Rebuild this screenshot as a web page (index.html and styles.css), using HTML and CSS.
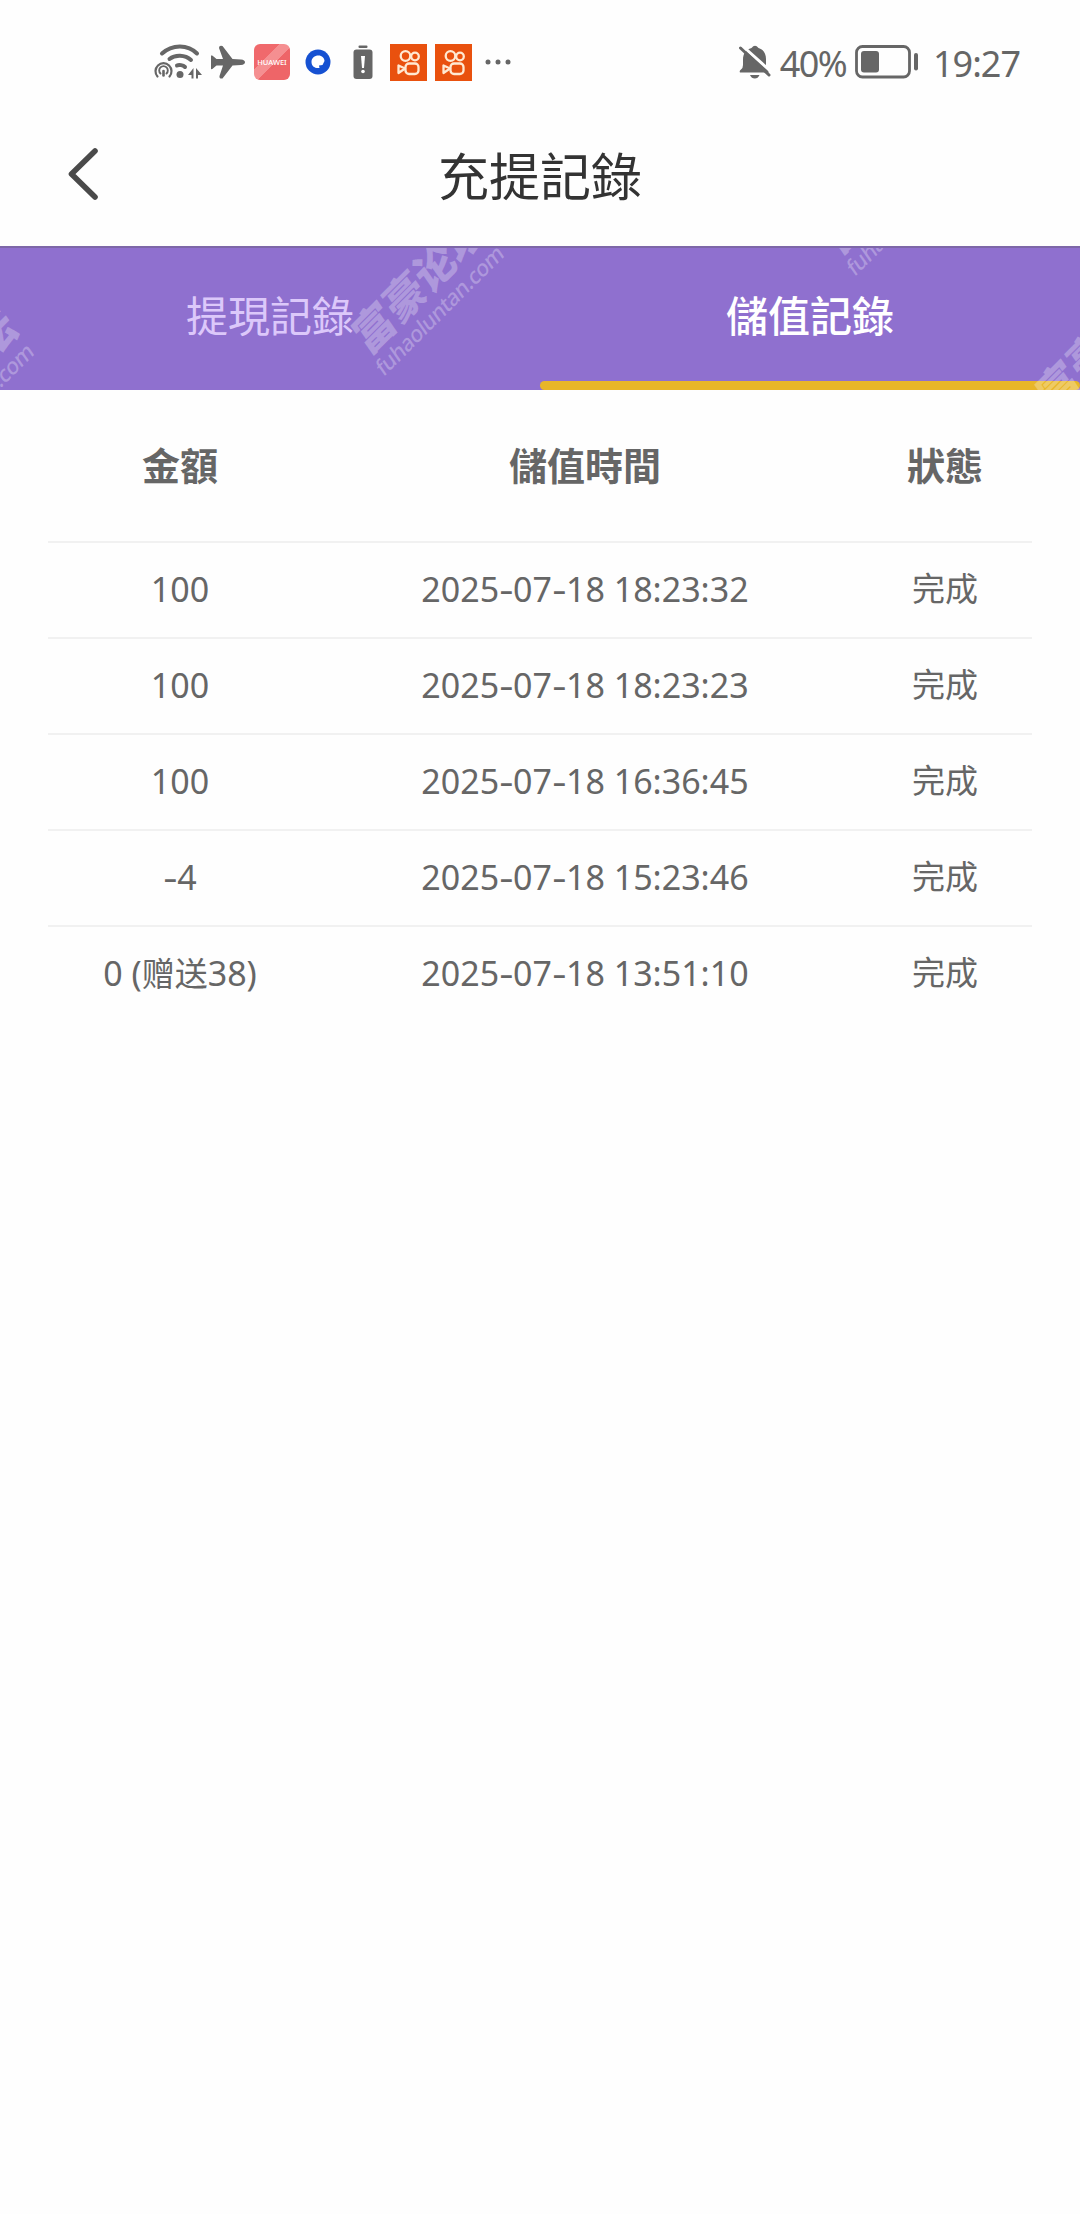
FILE: index.html
```html
<!DOCTYPE html>
<html lang="zh-Hant">
<head>
    <meta charset="UTF-8">
    <meta name="viewport" content="width=device-width, initial-scale=1.0">
    <title>充提記錄</title>
    <link rel="stylesheet" href="styles.css">
</head>
<body>
    <div class="status-bar">
        <div class="status-left">
            <!-- wifi -->
            <svg class="icon-wifi" width="48" height="36" viewBox="0 0 48 36" fill="none" stroke="#666" stroke-linecap="round">
                <path d="M8 9.500C18 0 34 0 43 9.500" stroke-width="4"/>
                <path d="M15.500 15C21 10.500 31 10.500 37 16" stroke-width="4"/>
                <path d="M23 21.500C25 20.500 29 21 31 23" stroke-width="4"/>
                <circle cx="26" cy="30.500" r="3.500" fill="#666" stroke="none"/>
                <path d="M3.500 32.500A8 8 0 1 1 15.500 32.500" stroke-width="2.200"/>
                <path d="M6.500 29.500A4.300 4.300 0 1 1 12.500 29.500" stroke-width="1.900"/>
                <path d="M9.500 27V31.500" stroke-width="2.600"/>
                <path d="M34 31L39.500 24V34.500H37.500V31ZM42 34.500V24L48 31H44V34.500Z" fill="#666" stroke="none"/>
            </svg>
            <!-- 飛航模式 -->
            <svg class="icon-plane" width="36" height="36" viewBox="0 0 36 36" fill="#666">
                <path d="M1 11.500Q2.500 11 3.500 12.500L6.500 15H13L9 4Q9 1 12.500 2L22.500 15L31 15.500Q35 16 35 18.200Q35 20.500 31 21L22.500 21.500L12.500 34.500Q9 35 9.500 32L13 21.500H6.500L3.500 24Q2.500 25.500 1 25Z"/>
            </svg>
            <div class="huawei"><span>HUAWEI</span></div>
            <svg class="icon-browser" width="26" height="26" viewBox="0 0 26 26">
                <circle cx="13" cy="13" r="12.500" fill="#1651d2"/>
                <path d="M13.500 6.500C17 6.500 19.500 9 19.500 12L17.500 16L14 16.500L14.500 19C9.500 19.500 6.500 17 6.500 13C6.500 9 9.500 6.500 13.500 6.500Z" fill="#fff"/>
            </svg>
            <svg class="icon-alert" width="20" height="36" viewBox="0 0 20 36">
                <rect x="5.500" y="1.500" width="9" height="2.500" rx="1" fill="#666"/>
                <rect x="0.500" y="5.500" width="19" height="29.500" rx="3" fill="#666"/>
                <path d="M8 12H12L11 24H9Z" fill="#fff"/>
                <circle cx="10" cy="27.500" r="1.800" fill="#fff"/>
            </svg>
            <svg class="icon-video" width="37" height="37" viewBox="0 0 37 37">
                <rect width="37" height="37" fill="#e9510e"/>
                <g fill="none" stroke="#ffe9d2" stroke-width="2.300" stroke-linejoin="round">
                    <circle cx="15.500" cy="12" r="4.800"/>
                    <circle cx="25" cy="12.500" r="3.800"/>
                    <rect x="15.500" y="19.500" width="13" height="10.500" rx="3.500"/>
                    <path d="M15 24.500L8.500 21.500V29Z"/>
                </g>
            </svg>
            <svg class="icon-video" width="37" height="37" viewBox="0 0 37 37">
                <rect width="37" height="37" fill="#e9510e"/>
                <g fill="none" stroke="#ffe9d2" stroke-width="2.300" stroke-linejoin="round">
                    <circle cx="15.500" cy="12" r="4.800"/>
                    <circle cx="25" cy="12.500" r="3.800"/>
                    <rect x="15.500" y="19.500" width="13" height="10.500" rx="3.500"/>
                    <path d="M15 24.500L8.500 21.500V29Z"/>
                </g>
            </svg>
            <svg class="icon-more" width="28" height="8" viewBox="0 0 28 8" fill="#666">
                <circle cx="4" cy="4" r="2.500"/>
                <circle cx="14" cy="4" r="2.500"/>
                <circle cx="24" cy="4" r="2.500"/>
            </svg>
        </div>
        <div class="status-right">
            <!-- 靜音 -->
            <svg class="icon-bell" width="34" height="36" viewBox="0 0 34 36">
                <path d="M5 16C5 9 8 5.500 13.500 4Q17 -0.500 20.500 4C25.500 5.500 28 9.500 28 15V23L31 28.500H2Q1 27 3 25.500Q5 24 5 21Z" fill="#666"/>
                <path d="M12 31H21.500Q20 34.500 16.800 34.500Q13.500 34.500 12 31Z" fill="#666"/>
                <path d="M4 1.500L34 28.500" stroke="#fff" stroke-width="3"/>
                <path d="M2.500 4L31 31" stroke="#666" stroke-width="3" stroke-linecap="round"/>
            </svg>
            <span class="percent">40%</span>
            <svg class="icon-battery" width="64" height="34" viewBox="0 0 64 34">
                <rect x="1.500" y="1.500" width="53" height="30.500" rx="6" fill="none" stroke="#666" stroke-width="2.800"/>
                <rect x="6" y="6" width="18" height="21.500" rx="3" fill="#666"/>
                <rect x="59" y="8" width="4" height="17.500" rx="2" fill="#666"/>
            </svg>
            <span class="clock">19:27</span>
        </div>
    </div>

    <div class="nav-bar">
        <svg class="back" width="32" height="54" viewBox="0 0 32 54">
            <path d="M28 4L4.500 27L28 50" fill="none" stroke="#4a4a4a" stroke-width="5.600" stroke-linecap="round" stroke-linejoin="round"/>
        </svg>
        <h1>充提記錄</h1>
    </div>

    <div class="tabs">
        <div class="tab">提現記錄</div>
        <div class="tab active">儲值記錄</div>
        <div class="watermark wm-left"><b>富豪论坛</b><span>fuhaoluntan.com</span></div>
        <div class="watermark wm-center"><b>富豪论坛</b><span>fuhaoluntan.com</span></div>
        <div class="watermark wm-top"><b>富豪论坛</b><span>fuhaoluntan.com</span></div>
        <div class="watermark wm-right"><b>富豪论坛</b><span>fuhaoluntan.com</span></div>
    </div>

    <div class="record-list">
        <div class="row head">
            <div>金額</div>
            <div>儲值時間</div>
            <div>狀態</div>
        </div>
        <div class="row">
            <div class="num">100</div>
            <div class="num">2025<i>-</i>07<i>-</i>18 18:23:32</div>
            <div>完成</div>
        </div>
        <div class="row">
            <div class="num">100</div>
            <div class="num">2025<i>-</i>07<i>-</i>18 18:23:23</div>
            <div>完成</div>
        </div>
        <div class="row">
            <div class="num">100</div>
            <div class="num">2025<i>-</i>07<i>-</i>18 16:36:45</div>
            <div>完成</div>
        </div>
        <div class="row">
            <div class="num"><i>-</i>4</div>
            <div class="num">2025<i>-</i>07<i>-</i>18 15:23:46</div>
            <div>完成</div>
        </div>
        <div class="row">
            <div class="num">0 (<span class="gift" lang="zh-Hans">赠送</span>38)</div>
            <div class="num">2025<i>-</i>07<i>-</i>18 13:51:10</div>
            <div>完成</div>
        </div>
    </div>
</body>
</html>
```
FILE: styles.css
```css
* {
    box-sizing: border-box;
}

body {
    margin: 0;
    width: 1080px;
    min-height: 2214px;
    background-color: #fefefe;
    color: #666;
    font-family: "Noto Sans", "Noto Sans CJK TC", sans-serif;
}

svg {
    display: block;
    flex: none;
}

/* 狀態列 */
.status-bar {
    display: flex;
    justify-content: space-between;
    height: 124px;
    padding: 0 60px 0 154px;
}

.status-left,
.status-right {
    display: flex;
    align-items: center;
    height: 124px;
}

.icon-plane {
    margin-left: 8px;
}

.huawei {
    display: flex;
    align-items: center;
    justify-content: center;
    width: 36px;
    height: 36px;
    margin-left: 8px;
    border-radius: 6px;
    background: linear-gradient(135deg, #f0696c 35%, #f58f91 35%, #f58f91 55%, #ee6568 55%);
    color: #fff;
    font-size: 7.5px;
    font-weight: 500;
}

.icon-browser {
    margin-left: 15px;
}

.icon-alert {
    margin-left: 22px;
}

.icon-video {
    margin-left: 17px;
}

.icon-video + .icon-video {
    margin-left: 8px;
}

.icon-more {
    margin-left: 12px;
}

.percent,
.clock {
    font-size: 36px;
    line-height: 40px;
    padding-top: 4px;
}

.percent {
    margin-left: 8px;
    letter-spacing: -1.6px;
}

.icon-battery {
    margin-left: 9px;
}

.clock {
    margin-left: 14px;
    letter-spacing: -1px;
}

/* 標題列 */
.nav-bar {
    display: grid;
    grid-template-columns: 1fr auto 1fr;
    align-items: center;
    height: 122px;
    padding: 0 67px 18px;
}

.nav-bar .back {
    margin-bottom: 4px;
}

.nav-bar h1 {
    margin: 0;
    font-size: 51px;
    line-height: 60px;
    font-weight: normal;
    color: #333;
}

/* 分頁 */
.tabs {
    display: flex;
    position: relative;
    height: 144px;
    border-top: 2px solid #7d67a8;
    background-color: #8f70cf;
    overflow: hidden;
}

.tab {
    flex: 1;
    padding-top: 38px;
    border-bottom: 9px solid transparent;
    color: #dcc8fa;
    font-size: 42px;
    line-height: 60px;
    text-align: center;
}

.tab.active {
    position: relative;
    color: #fff;
    font-weight: 500;
}

.tab.active::after {
    content: "";
    position: absolute;
    left: 0;
    right: 0;
    bottom: -9px;
    height: 9px;
    border-radius: 5px;
    background-color: #e8b628;
}

/* 浮水印 */
.watermark {
    position: absolute;
    display: flex;
    flex-direction: column;
    width: 172px;
    color: rgba(255, 255, 255, 0.28);
    font-family: "Noto Sans", "Noto Sans CJK SC", sans-serif;
    white-space: nowrap;
    transform: rotate(-45deg) skewX(-10deg);
}

.watermark b {
    font-size: 43px;
    line-height: 44px;
    font-weight: 900;
}

.watermark span {
    font-size: 22px;
    line-height: 22px;
    font-weight: 500;
    letter-spacing: -0.6px;
}

.wm-left {
    left: -130px;
    top: 108px;
}

.wm-center {
    left: 340px;
    top: 10px;
}

.wm-top {
    left: 811px;
    top: -90px;
}

.wm-right {
    left: 1024px;
    top: 69px;
}

/* 記錄 */
.record-list {
    padding: 0 48px;
}

.row {
    display: grid;
    grid-template-columns: 264px 546px 174px;
    align-items: center;
    height: 96px;
    padding-bottom: 2px;
    font-size: 33px;
    line-height: 48px;
    text-align: center;
}

.row + .row {
    border-top: 2px solid #f1f1f1;
}

.row.head {
    height: 151px;
    font-size: 38px;
    font-weight: bold;
}

.num {
    font-size: 34px;
}

.num i {
    display: inline-block;
    font-style: normal;
    transform: scaleX(1.3);
    margin: 0 1.5px;
}

.gift {
    font-family: "Noto Sans CJK SC", sans-serif;
    font-size: 33px;
    line-height: 1;
}
```
